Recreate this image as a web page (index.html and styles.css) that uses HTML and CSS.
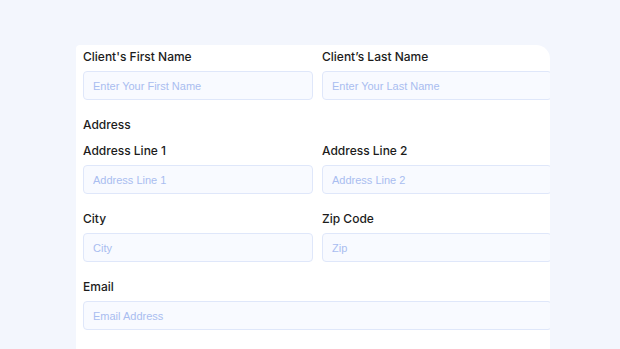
FILE: index.html
```html
<!DOCTYPE html>
<html lang="en">
<head>
    <meta charset="UTF-8">
    <meta name="viewport" content="width=device-width, initial-scale=1.0">
    <title>Client Details</title>
    <link rel="stylesheet" href="styles.css">
</head>
<body>
    <div class="card">
        <form class="client-form">
            <div class="row">
                <div class="field">
                    <label>Client's First Name</label>
                    <input type="text" placeholder="Enter Your First Name">
                </div>
                <div class="field">
                    <label>Client’s Last Name</label>
                    <input type="text" placeholder="Enter Your Last Name">
                </div>
            </div>
            <div class="section-title">Address</div>
            <div class="row">
                <div class="field">
                    <label>Address Line 1</label>
                    <input type="text" placeholder="Address Line 1">
                </div>
                <div class="field">
                    <label>Address Line 2</label>
                    <input type="text" placeholder="Address Line 2">
                </div>
            </div>
            <div class="row">
                <div class="field">
                    <label>City</label>
                    <input type="text" placeholder="City">
                </div>
                <div class="field">
                    <label>Zip Code</label>
                    <input type="text" placeholder="Zip">
                </div>
            </div>
            <div class="row single">
                <div class="field">
                    <label>Email</label>
                    <input type="email" placeholder="Email Address">
                </div>
            </div>
            <div class="row single">
                <div class="field">
                    <label>Phone Number</label>
                    <input type="tel" placeholder="Phone Number">
                </div>
            </div>
        </form>
    </div>
</body>
</html>
```

FILE: styles.css
```css
body { margin: 0; padding: 45px 0 0 76px; background-color: #f3f6fd; font-family: Inter, "Noto Sans", sans-serif; height: 349px; box-sizing: border-box; overflow: hidden; }

.card { width: 474px; height: 400px; background-color: #fff; border-radius: 4px 14px 0 0; overflow: hidden; padding: 4px 0 0 7px; box-sizing: border-box; }
.client-form { width: 469px; display: flex; flex-direction: column; gap: 17px; }

.row { display: grid; grid-template-columns: 230px 230px; column-gap: 9px; }
.row.single { grid-template-columns: 469px; }

.field { display: flex; flex-direction: column; }
.field label, .section-title { font-size: 12px; line-height: 16px; font-weight: 500; color: #1c1c1c; }
.field label { margin-bottom: 6px; }
.section-title { margin-bottom: -7px; }

.field input {
    height: 29px;
    box-sizing: border-box;
    border: 1px solid #dfe7fa;
    border-radius: 4px;
    background-color: #f8faff;
    padding: 0 9px;
    font-family: "Liberation Sans", Arial, sans-serif;
    font-size: 11px;
    outline: none;
}
.field input::placeholder { color: #a9bdf0; }
```
